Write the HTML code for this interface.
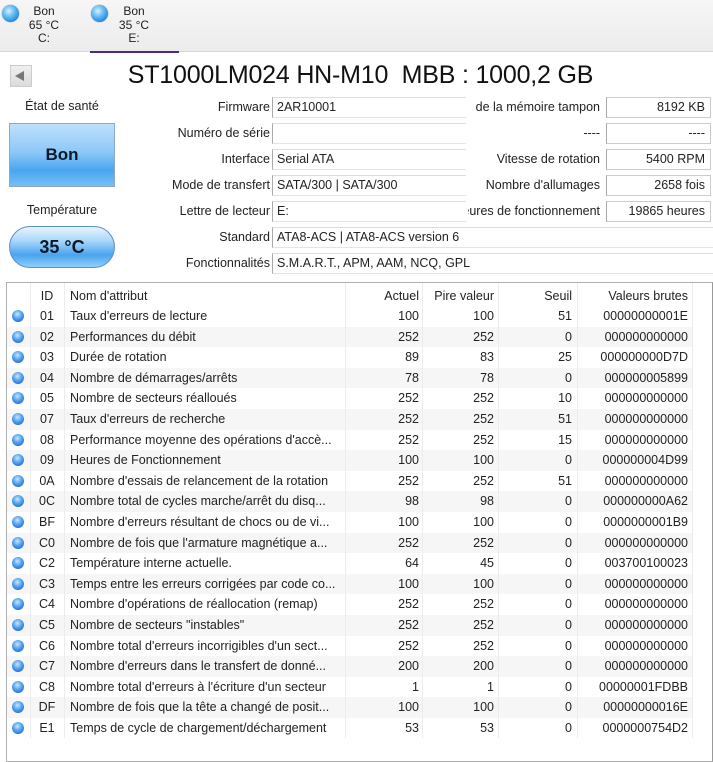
<!DOCTYPE html>
<html><head><meta charset="utf-8"><style>
*{margin:0;padding:0;box-sizing:border-box}
body{width:713px;height:750px;overflow:hidden;background:#fff;font-family:"Liberation Sans",sans-serif;font-size:12.5px;color:#222;position:relative}
.abs{position:absolute}
.tabs{left:0;top:0;width:713px;height:52px;background:linear-gradient(#f6f6f6,#ececec);border-bottom:1px solid #d8d8d8}
.tab{position:absolute;top:5px;text-align:center;font-size:12px;line-height:13.5px;color:#222}
.orb{position:absolute;width:17px;height:17px;border-radius:50%;background:radial-gradient(circle at 40% 35%,#d8f0ff 0,#6cc0f5 35%,#1b7fd6 80%);box-shadow:0 0 1px #357}
.lbl{position:absolute;text-align:right;white-space:nowrap;font-size:12.5px}
.box{position:absolute;height:21px;border-left:1px solid #aaa;border-top:1px solid #ddd;border-bottom:1px solid #e4e4e4;background:#fff;padding-left:4px;line-height:19px;white-space:nowrap;overflow:hidden;font-size:12.5px}
.rbox{position:absolute;height:21px;border:1px solid #ccc;border-left-color:#aaa;background:#fff;padding-right:5px;text-align:right;line-height:19px;font-size:12.5px}
.tbl{left:6px;top:282px;width:707px;height:480px;border:1px solid #b0b0b0;border-right:1px solid #999}
.row{position:absolute;left:7px;width:685px;height:20.6px;line-height:20.6px;white-space:nowrap}
.row span{position:absolute;top:0;overflow:hidden}
.c1{left:0;width:23px}
.c2{left:23px;width:34px;text-align:center}
.c3{left:63px;width:275px}
.c4{left:338px;width:74px;text-align:right}
.c5{left:415px;width:72px;text-align:right}
.c6{left:491px;width:74px;text-align:right}
.c7{left:570px;width:111px;text-align:right}
.dot{position:absolute;left:5px;top:4px;width:12px;height:12px;border-radius:50%;background:radial-gradient(circle at 45% 35%,#c8e6ff 0,#5aa8f0 40%,#2064d0 85%)}
.vl{position:absolute;top:283px;height:455px;width:1px;background:#ececec}
</style></head><body>
<div class="abs tabs"></div>
<div class="orb" style="left:2px;top:5px"></div>
<div class="tab" style="left:24px;width:40px">Bon<br>65 °C<br>C:</div>
<div class="orb" style="left:91px;top:5px"></div>
<div class="tab" style="left:114px;width:40px">Bon<br>35 °C<br>E:</div>
<div class="abs" style="left:90px;top:51px;width:89px;height:2px;background:#4b2a8a"></div>

<div class="abs" style="left:10px;top:65px;width:22px;height:22px;background:linear-gradient(#f0f0f0,#dcdcdc);border:1px solid #ccc"></div>
<div class="abs" style="left:15px;top:71px;width:0;height:0;border-top:5px solid transparent;border-bottom:5px solid transparent;border-right:9px solid #777"></div>
<div class="abs" style="left:0;top:61px;width:713px;text-align:center;font-size:25px;padding-left:8px;color:#111;letter-spacing:-0.2px">ST1000LM024 HN-M10&nbsp; MBB : 1000,2 GB</div>

<div class="abs" style="left:0;top:99px;width:124px;text-align:center">État de santé</div>
<div class="abs" style="left:9px;top:123px;width:106px;height:64px;border:1px solid #8aa8c8;background:linear-gradient(#bfe0fb 0,#8dc8f7 45%,#4aa6ef 75%,#76bff5 100%);text-align:center;line-height:62px;font-weight:bold;font-size:17px;color:#0a1a2a">Bon</div>
<div class="abs" style="left:0;top:203px;width:124px;text-align:center">Température</div>
<div class="abs" style="left:9px;top:226px;width:106px;height:42px;border:1px solid #5d8fc8;border-radius:21px;background:linear-gradient(#e8f5ff 0,#a8d6fa 35%,#4aa3ee 70%,#8fd0fb 100%);text-align:center;line-height:40px;font-weight:bold;font-size:18px;color:#0a1a2a">35 °C</div>

<div class="lbl" style="right:443px;top:100px">Firmware</div>
<div class="lbl" style="right:443px;top:126px">Numéro de série</div>
<div class="lbl" style="right:443px;top:152px">Interface</div>
<div class="lbl" style="right:443px;top:178px">Mode de transfert</div>
<div class="lbl" style="right:443px;top:204px">Lettre de lecteur</div>
<div class="lbl" style="right:443px;top:230px">Standard</div>
<div class="lbl" style="right:443px;top:256px">Fonctionnalités</div>
<div class="box" style="left:272px;top:97px;width:194px">2AR10001</div>
<div class="box" style="left:272px;top:123px;width:194px"></div>
<div class="box" style="left:272px;top:149px;width:194px">Serial ATA</div>
<div class="box" style="left:272px;top:175px;width:194px">SATA/300 | SATA/300</div>
<div class="box" style="left:272px;top:201px;width:194px">E:</div>
<div class="box" style="left:272px;top:227px;width:441px">ATA8-ACS | ATA8-ACS version 6</div>
<div class="box" style="left:272px;top:253px;width:441px">S.M.A.R.T., APM, AAM, NCQ, GPL</div>

<div class="lbl" style="left:466px;width:134px;top:100px;overflow:hidden;direction:rtl">de la mémoire tampon</div>
<div class="lbl" style="left:466px;width:134px;top:126px">----</div>
<div class="lbl" style="left:466px;width:134px;top:152px">Vitesse de rotation</div>
<div class="lbl" style="left:466px;width:134px;top:178px">Nombre d'allumages</div>
<div class="lbl" style="left:468px;width:132px;top:204px;overflow:hidden;direction:rtl">Heures de fonctionnement</div>
<div class="rbox" style="left:606px;top:97px;width:105px">8192 KB</div>
<div class="rbox" style="left:606px;top:123px;width:105px">----</div>
<div class="rbox" style="left:606px;top:149px;width:105px">5400 RPM</div>
<div class="rbox" style="left:606px;top:175px;width:105px">2658 fois</div>
<div class="rbox" style="left:606px;top:201px;width:105px">19865 heures</div>

<div class="abs tbl"></div>
<div class="row" style="top:285.5px"><span class="c2">ID</span><span class="c3">Nom d'attribut</span><span class="c4">Actuel</span><span class="c5">Pire valeur</span><span class="c6">Seuil</span><span class="c7">Valeurs brutes</span></div>
<div class="row" style="top:306px"><i class="dot"></i><span class="c2">01</span><span class="c3">Taux d'erreurs de lecture</span><span class="c4">100</span><span class="c5">100</span><span class="c6">51</span><span class="c7">00000000001E</span></div>
<div class="row" style="top:326.6px;background:#f6f6f6"><i class="dot"></i><span class="c2">02</span><span class="c3">Performances du débit</span><span class="c4">252</span><span class="c5">252</span><span class="c6">0</span><span class="c7">000000000000</span></div>
<div class="row" style="top:347.2px"><i class="dot"></i><span class="c2">03</span><span class="c3">Durée de rotation</span><span class="c4">89</span><span class="c5">83</span><span class="c6">25</span><span class="c7">000000000D7D</span></div>
<div class="row" style="top:367.8px;background:#f6f6f6"><i class="dot"></i><span class="c2">04</span><span class="c3">Nombre de démarrages/arrêts</span><span class="c4">78</span><span class="c5">78</span><span class="c6">0</span><span class="c7">000000005899</span></div>
<div class="row" style="top:388.4px"><i class="dot"></i><span class="c2">05</span><span class="c3">Nombre de secteurs réalloués</span><span class="c4">252</span><span class="c5">252</span><span class="c6">10</span><span class="c7">000000000000</span></div>
<div class="row" style="top:409px;background:#f6f6f6"><i class="dot"></i><span class="c2">07</span><span class="c3">Taux d'erreurs de recherche</span><span class="c4">252</span><span class="c5">252</span><span class="c6">51</span><span class="c7">000000000000</span></div>
<div class="row" style="top:429.6px"><i class="dot"></i><span class="c2">08</span><span class="c3">Performance moyenne des opérations d'accè...</span><span class="c4">252</span><span class="c5">252</span><span class="c6">15</span><span class="c7">000000000000</span></div>
<div class="row" style="top:450.2px;background:#f6f6f6"><i class="dot"></i><span class="c2">09</span><span class="c3">Heures de Fonctionnement</span><span class="c4">100</span><span class="c5">100</span><span class="c6">0</span><span class="c7">000000004D99</span></div>
<div class="row" style="top:470.8px"><i class="dot"></i><span class="c2">0A</span><span class="c3">Nombre d'essais de relancement de la rotation</span><span class="c4">252</span><span class="c5">252</span><span class="c6">51</span><span class="c7">000000000000</span></div>
<div class="row" style="top:491.4px;background:#f6f6f6"><i class="dot"></i><span class="c2">0C</span><span class="c3">Nombre total de cycles marche/arrêt du disq...</span><span class="c4">98</span><span class="c5">98</span><span class="c6">0</span><span class="c7">000000000A62</span></div>
<div class="row" style="top:512px"><i class="dot"></i><span class="c2">BF</span><span class="c3">Nombre d'erreurs résultant de chocs ou de vi...</span><span class="c4">100</span><span class="c5">100</span><span class="c6">0</span><span class="c7">0000000001B9</span></div>
<div class="row" style="top:532.6px;background:#f6f6f6"><i class="dot"></i><span class="c2">C0</span><span class="c3">Nombre de fois que l'armature magnétique a...</span><span class="c4">252</span><span class="c5">252</span><span class="c6">0</span><span class="c7">000000000000</span></div>
<div class="row" style="top:553.2px"><i class="dot"></i><span class="c2">C2</span><span class="c3">Température interne actuelle.</span><span class="c4">64</span><span class="c5">45</span><span class="c6">0</span><span class="c7">003700100023</span></div>
<div class="row" style="top:573.8px;background:#f6f6f6"><i class="dot"></i><span class="c2">C3</span><span class="c3">Temps entre les erreurs corrigées par code co...</span><span class="c4">100</span><span class="c5">100</span><span class="c6">0</span><span class="c7">000000000000</span></div>
<div class="row" style="top:594.4px"><i class="dot"></i><span class="c2">C4</span><span class="c3">Nombre d'opérations de réallocation (remap)</span><span class="c4">252</span><span class="c5">252</span><span class="c6">0</span><span class="c7">000000000000</span></div>
<div class="row" style="top:615px;background:#f6f6f6"><i class="dot"></i><span class="c2">C5</span><span class="c3">Nombre de secteurs "instables"</span><span class="c4">252</span><span class="c5">252</span><span class="c6">0</span><span class="c7">000000000000</span></div>
<div class="row" style="top:635.6px"><i class="dot"></i><span class="c2">C6</span><span class="c3">Nombre total d'erreurs incorrigibles d'un sect...</span><span class="c4">252</span><span class="c5">252</span><span class="c6">0</span><span class="c7">000000000000</span></div>
<div class="row" style="top:656.2px;background:#f6f6f6"><i class="dot"></i><span class="c2">C7</span><span class="c3">Nombre d'erreurs dans le transfert de donné...</span><span class="c4">200</span><span class="c5">200</span><span class="c6">0</span><span class="c7">000000000000</span></div>
<div class="row" style="top:676.8px"><i class="dot"></i><span class="c2">C8</span><span class="c3">Nombre total d'erreurs à l'écriture d'un secteur</span><span class="c4">1</span><span class="c5">1</span><span class="c6">0</span><span class="c7">00000001FDBB</span></div>
<div class="row" style="top:697.4px;background:#f6f6f6"><i class="dot"></i><span class="c2">DF</span><span class="c3">Nombre de fois que la tête a changé de posit...</span><span class="c4">100</span><span class="c5">100</span><span class="c6">0</span><span class="c7">00000000016E</span></div>
<div class="row" style="top:718px"><i class="dot"></i><span class="c2">E1</span><span class="c3">Temps de cycle de chargement/déchargement</span><span class="c4">53</span><span class="c5">53</span><span class="c6">0</span><span class="c7">0000000754D2</span></div>
<div class="vl" style="left:30px"></div><div class="vl" style="left:64px"></div><div class="vl" style="left:345px"></div><div class="vl" style="left:422px"></div><div class="vl" style="left:498px"></div><div class="vl" style="left:577px"></div><div class="vl" style="left:692px"></div>
</body></html>
